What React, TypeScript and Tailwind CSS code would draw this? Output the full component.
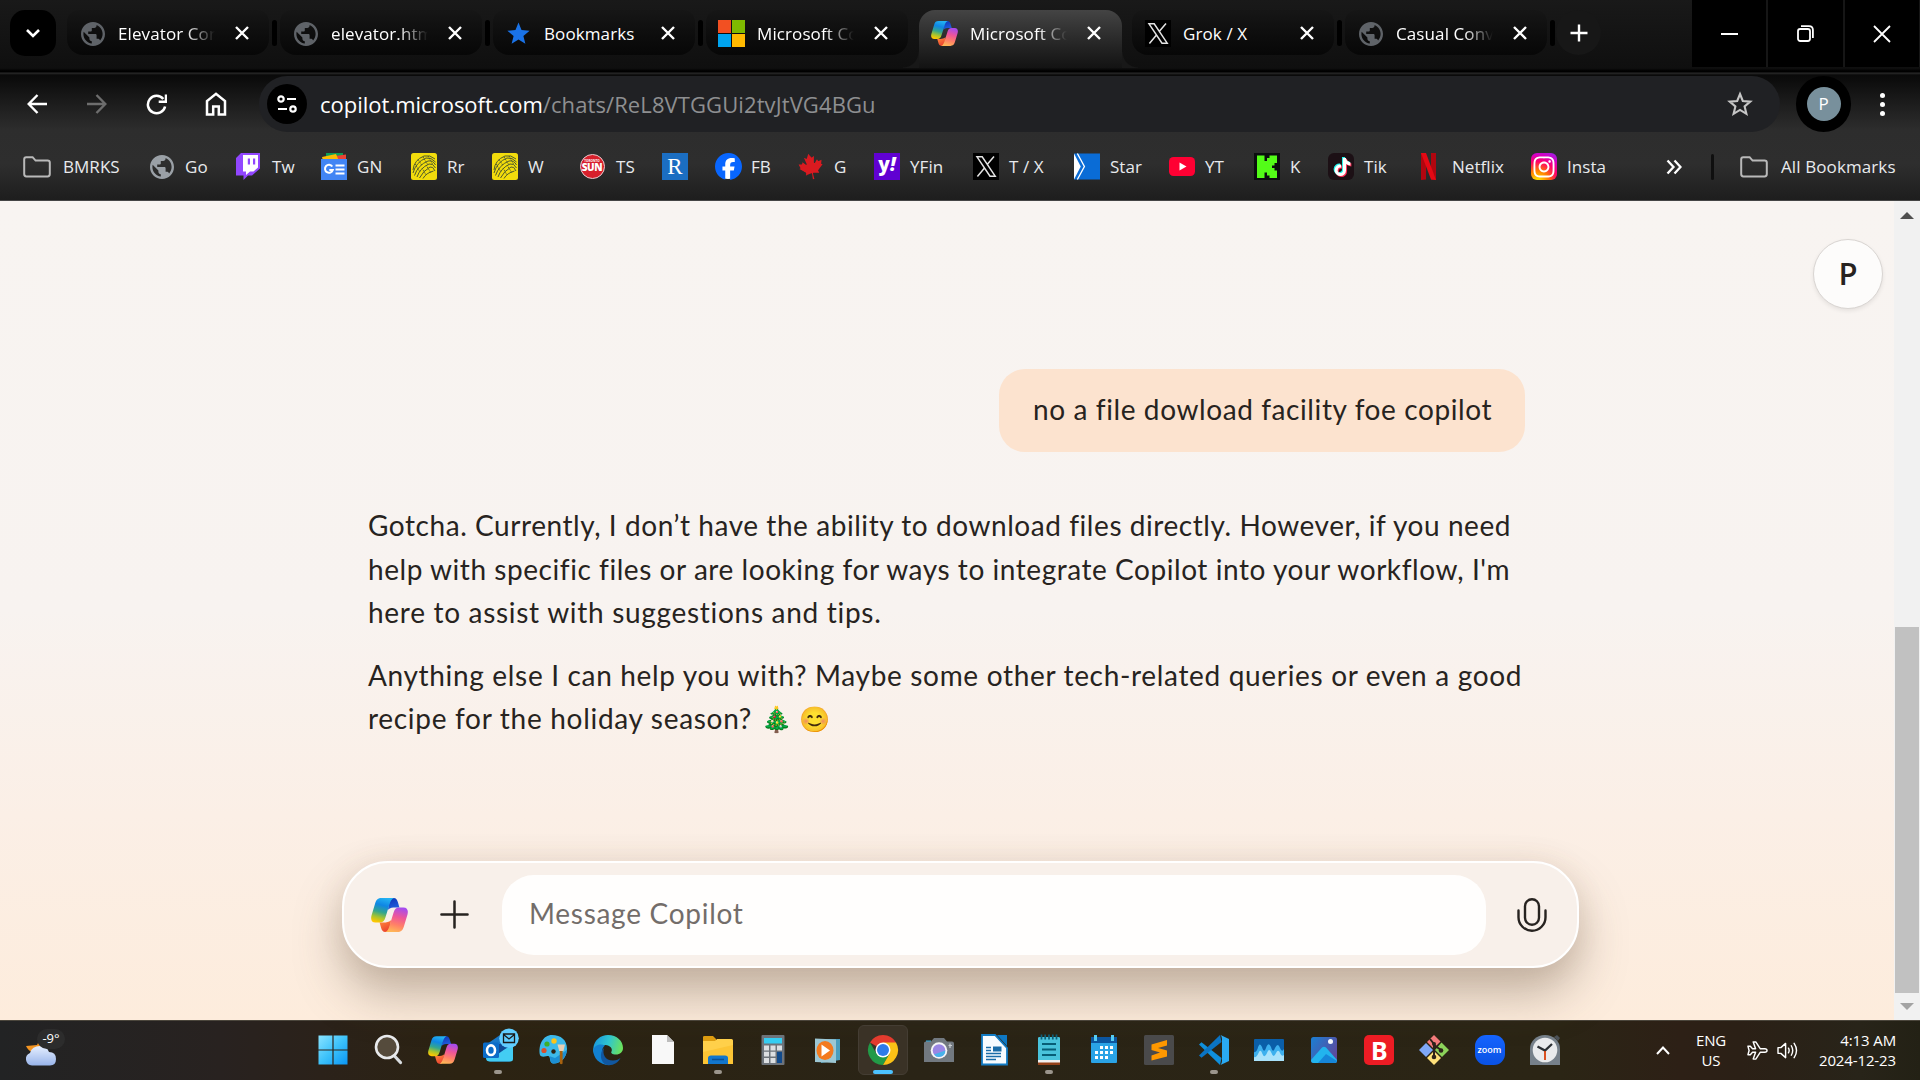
import React from "react";
import { FaFacebook, FaCanadianMapleLeaf, FaTiktok, FaInstagram } from "react-icons/fa6";

/* ---------- shared glyphs ---------- */

const GLOBE =
  "M12 2C6.48 2 2 6.48 2 12s4.48 10 10 10 10-4.48 10-10S17.52 2 12 2zm-1 17.93c-3.95-.49-7-3.85-7-7.93 0-.62.08-1.21.21-1.79L9 15v1c0 1.1.9 2 2 2v1.93zm6.9-2.54c-.26-.81-1-1.39-1.9-1.39h-1v-3c0-.55-.45-1-1-1H8v-2h2c.55 0 1-.45 1-1V7h2c1.1 0 2-.9 2-2v-.41c2.93 1.19 5 4.06 5 7.41 0 2.08-.8 3.97-2.1 5.39z";

function Globe({ className }: { className: string }) {
  return (
    <svg viewBox="2 2 20 20" className={className}>
      <path d={GLOBE} fill="currentColor" />
    </svg>
  );
}

const RIBBON =
  "M10.5 0H23C20.4 .8 19.3 3.6 18.4 6.6L14.4 19.5C13.3 23 12 24.6 8.8 24.6H4.6C.6 24.6-.5 21.6.5 17.6L4.2 5.2C5.4 1.4 7 0 10.5 0Z";
const FOLD = "M20 0H22.6C25.2 0 26.2 1.800 27 4.600L28.400 9.600H24.400C21.600 9.600 19.300 9.800 17 11.800L17.400 8.600C18.400 4.800 18.600 1.600 20 0Z";

function Copilot({ className, id }: { className: string; id: string }) {
  return (
    <svg viewBox="0 0 37 34" className={className}>
      <defs>
        <linearGradient id={`${id}a`} x1=".6" y1="0" x2=".35" y2="1">
          <stop offset="0" stopColor="#23b2f2" />
          <stop offset=".3" stopColor="#0f86e4" />
          <stop offset=".58" stopColor="#34a68d" />
          <stop offset=".8" stopColor="#a7c42f" />
          <stop offset="1" stopColor="#ffc700" />
        </linearGradient>
        <linearGradient id={`${id}b`} x1=".6" y1="0" x2=".35" y2="1">
          <stop offset="0" stopColor="#ffb657" />
          <stop offset=".3" stopColor="#ff7f68" />
          <stop offset=".62" stopColor="#ee5599" />
          <stop offset="1" stopColor="#a54bf0" />
        </linearGradient>
        <linearGradient id={`${id}c`} x1=".3" y1="0" x2=".6" y2="1">
          <stop offset="0" stopColor="#0f38b8" />
          <stop offset="1" stopColor="#2462e0" />
        </linearGradient>
        <linearGradient id={`${id}d`} x1=".3" y1="0" x2=".8" y2="1">
          <stop offset="0" stopColor="#e93b2e" />
          <stop offset="1" stopColor="#ff8a3c" />
        </linearGradient>
      </defs>
      <path d={FOLD} fill={`url(#${id}c)`} />
      <path d={RIBBON} fill={`url(#${id}a)`} />
      <g transform="rotate(180 18.5 17)">
        <path d={FOLD} fill={`url(#${id}d)`} />
        <path d={RIBBON} fill={`url(#${id}b)`} />
      </g>
    </svg>
  );
}

function MicrosoftLogo() {
  return (
    <div className="grid h-[27px] w-[27px] grid-cols-2 gap-[1.5px]">
      <i className="bg-[#f25022]" />
      <i className="bg-[#7fba00]" />
      <i className="bg-[#00a4ef]" />
      <i className="bg-[#ffb900]" />
    </div>
  );
}

function XTile() {
  return (
    <svg viewBox="0 0 26 27" className="h-[27px] w-[26px]">
      <path d="M0 0H26V27H0Z" fill="#000" />
      <path d="M4 3.800H9.200L22.200 23.200H17ZM21 3.500L14.600 11M11.300 15.200L4.400 23.500" fill="none" stroke="#e4e4e4" strokeWidth="1.500" />
    </svg>
  );
}

function Folder() {
  return (
    <svg viewBox="0 0 28 22" className="h-[22px] w-7" fill="none" stroke="#b9b9b9" strokeWidth="2">
      <path d="M1.2 18V3.4Q1.2 1.2 3.2 1.2H9.6L12.6 4.6H24.6Q26.8 4.6 26.8 6.6V18Q26.8 20.4 24.6 20.4H3.4Q1.2 20.4 1.2 18Z" />
    </svg>
  );
}

/* ---------- tab strip ---------- */

function CloseX() {
  return (
    <svg viewBox="0 0 14 14" className="h-[14px] w-[14px]" stroke="#fff" strokeWidth="2.4">
      <path d="M1 1L13 13M13 1L1 13" />
    </svg>
  );
}

function Tab({ icon, title, active, edge }: { icon: React.ReactNode; title: string; active?: boolean; edge?: boolean }) {
  return (
    <div className="flex w-[213px] shrink-0 items-start">
      <div
        className={
          active
            ? "relative flex h-[58px] w-[203px] items-start rounded-t-[16px] bg-gradient-to-b from-[#444444] to-[#131313]"
            : "flex h-[45px] w-[202px] items-start rounded-b-[16px] rounded-t-[12px] bg-gradient-to-b from-[#161616] to-[#070707]"
        }
      >
        {active && (
          <>
            <i className="absolute -left-4 bottom-0 h-4 w-4 bg-[radial-gradient(circle_at_0_0,transparent_15px,#181818_16px)]" />
            <i className="absolute -right-4 bottom-0 h-4 w-4 bg-[radial-gradient(circle_at_100%_0,transparent_15px,#181818_16px)]" />
          </>
        )}
        <div className="ml-[12px] mt-[10px] flex h-[27px] w-[27px] items-center justify-center">{icon}</div>
        <span
          className="ml-3 mt-[9px] w-[97px] overflow-hidden whitespace-nowrap text-[17px] leading-[29px] tracking-[0.1px] text-white [mask-image:linear-gradient(to_right,#000_68px,transparent_97px)] data-[full=true]:[mask-image:none]"
          data-full={title.length < 10}
        >
          {title}
        </span>
        <div className="ml-[20px] mt-[16px]">
          <CloseX />
        </div>
      </div>
      {edge && <i className="ml-[3px] mt-[10px] h-[26px] w-[5px] rounded-full bg-black" />}
    </div>
  );
}

function TabStrip() {
  return (
    <div className="flex h-[68px] items-start bg-gradient-to-b from-[#191919] to-[#0f0f0f]">
      <div className="ml-[10px] mt-[10px] flex h-[46px] w-[46px] items-center justify-center rounded-[15px] bg-black">
        <svg viewBox="0 0 14 9" className="h-[9px] w-[14px]" fill="none" stroke="#fff" strokeWidth="2.6">
          <path d="M1 1L7 7L13 1" />
        </svg>
      </div>
      <div className="ml-[11px] mt-[10px] flex">
        <Tab edge icon={<Globe className="h-6 w-6 text-[#5f6368]" />} title="Elevator Conv" />
        <Tab edge icon={<Globe className="h-6 w-6 text-[#5f6368]" />} title="elevator.html" />
        <Tab
          edge
          title="Bookmarks"
          icon={
            <svg viewBox="0 0 24 24" className="h-[25px] w-[25px]">
              <path d="M12 1.5l2.9 7.2 7.8.6-6 5 1.9 7.6L12 17.8l-6.6 4.1 1.9-7.6-6-5 7.8-.6z" fill="#1a73e8" />
            </svg>
          }
        />
        <Tab icon={<MicrosoftLogo />} title="Microsoft Cop" />
        <Tab active icon={<Copilot id="tab" className="h-[25px] w-[27px]" />} title="Microsoft Cop" />
        <Tab edge icon={<XTile />} title="Grok / X" />
        <Tab edge icon={<Globe className="h-6 w-6 text-[#5f6368]" />} title="Casual Conve" />
      </div>
      <div className="-ml-[2px] mt-[10px] flex h-[45px] w-[45px] items-center justify-center rounded-full bg-[#171717]">
        <svg viewBox="0 0 18 18" className="h-[18px] w-[18px]" stroke="#fff" strokeWidth="2.4">
          <path d="M9 .5V17.5M.5 9H17.5" />
        </svg>
      </div>
      <div className="ml-auto flex h-[67px] w-[228px] gap-[2px] bg-[#161616] pr-[1px]">
        <div className="flex flex-1 items-center justify-center bg-black">
          <i className="h-[2px] w-[17px] bg-white" />
        </div>
        <div className="flex flex-1 items-center justify-center bg-black">
          <svg viewBox="0 0 17 17" className="h-[17px] w-[17px]" fill="none" stroke="#fff" strokeWidth="1.8">
            <rect x="1" y="4" width="12" height="12" rx="2.2" />
            <path d="M4 1.2H12Q15.9 1.2 15.9 5V13" />
          </svg>
        </div>
        <div className="flex flex-1 items-center justify-center bg-black">
          <svg viewBox="0 0 18 18" className="h-[18px] w-[18px]" stroke="#fff" strokeWidth="1.8">
            <path d="M1 1L17 17M17 1L1 17" />
          </svg>
        </div>
      </div>
    </div>
  );
}

/* ---------- address row ---------- */

function AddressRow() {
  return (
    <div className="flex h-[58px] items-center">
      <svg viewBox="0 0 20 20" className="ml-[27px] h-5 w-5" fill="none" stroke="#fff" strokeWidth="2.4">
        <path d="M20 10H2M10.5 1L1.7 10L10.5 19" />
      </svg>
      <svg viewBox="0 0 20 20" className="ml-10 h-5 w-5" fill="none" stroke="#6d6d6d" strokeWidth="2.4">
        <path d="M0 10H18M9.5 1L18.3 10L9.5 19" />
      </svg>
      <svg viewBox="0 0 21 21" className="ml-[39px] h-[21px] w-[21px]" fill="none" stroke="#fff" strokeWidth="2.5">
        <path d="M17.3 5A8.7 8.7 0 1 0 19.1 12.5" />
        <path d="M20 .5V7.7H12.7" />
      </svg>
      <svg viewBox="0 0 22 24" className="ml-[38px] h-6 w-[22px]" fill="none" stroke="#fff" strokeWidth="2.5">
        <path d="M2 22.5V9L11 1.8L20 9V22.5H13.8V14.5H8.2V22.5Z" />
      </svg>
      <div className="ml-[32px] flex h-[56px] w-[1521px] items-center rounded-full bg-[#202124]">
        <div className="ml-2 flex h-10 w-10 items-center justify-center rounded-full bg-black">
          <svg viewBox="0 0 20 18" className="h-[18px] w-5" fill="none" stroke="#fff" strokeWidth="2.2">
            <circle cx="4" cy="4" r="2.7" />
            <path d="M10 4H19M1 14H10" />
            <circle cx="16" cy="14" r="2.7" />
          </svg>
        </div>
        <div className="ml-[13px] whitespace-nowrap text-[22px] leading-none text-white">
          <span>copilot.microsoft.com</span>
          <span className="tracking-[0.1px] text-[#8e8f91]">/chats/ReL8VTGGUi2tvJtVG4BGu</span>
        </div>
        <svg viewBox="0 0 26 26" className="ml-auto mr-[27px] h-[26px] w-[26px]" fill="none" stroke="#c6c6c6" strokeWidth="2.1">
          <path d="M13 3l2.8 7 7.5.6-5.7 4.900 1.800 7.300L13 18.900l-6.400 3.900 1.800-7.300-5.700-4.900 7.500-.6z" />
        </svg>
      </div>
      <div className="ml-4 flex h-[56px] w-[55px] items-center justify-center rounded-full bg-black">
        <div className="flex h-[34px] w-[34px] items-center justify-center rounded-full bg-[#78909c] text-[17px] text-white">P</div>
      </div>
      <div className="ml-[29px] flex flex-col gap-[4px]">
        <i className="h-[5px] w-[5px] rounded-full bg-white" />
        <i className="h-[5px] w-[5px] rounded-full bg-white" />
        <i className="h-[5px] w-[5px] rounded-full bg-white" />
      </div>
    </div>
  );
}

/* ---------- bookmarks bar ---------- */

function RogersBall() {
  return (
    <svg viewBox="0 0 26 27" className="h-[27px] w-[26px]">
      <rect width="26" height="27" rx="2.5" fill="#f2dc0c" />
      <g fill="none" stroke="#4f5a2c" strokeWidth="1">
        <path d="M2 17Q3 7 13 3Q19 1.500 24 6M2 20Q5 9 15 5Q20 4 24.500 9M3.500 22.500Q7 12 17 8Q22 7 24.500 12M6 24Q9 15 18 11Q22 10 24.500 15M8.500 25Q12 18 19 14Q22 13 24 18M12 25.500Q15 20 22.500 18" />
        <path d="M7 6.500L11 12.500M12 4L17 12M17 3L21.500 11M4 11L9 19M11 15L15 22M15 12L20 20" strokeDasharray="1.5 1" />
      </g>
    </svg>
  );
}

const BOOKMARKS: { label: string; width: string; icon: React.ReactNode }[] = [
  { label: "Go", width: "w-[87px]", icon: <Globe className="h-6 w-6 text-[#9aa0a6]" /> },
  {
    label: "Tw",
    width: "w-[85px]",
    icon: (
      <svg viewBox="0 0 24 27" className="-ml-[2px] h-[27px] w-6">
        <path d="M5 0H24V15.5L16 22.5H12L7.5 27V22.5H0V5Z" fill="#9146ff" />
        <path d="M7 2H22V14.5L17.5 18.5H14L10 22V18.5H7Z" fill="#fff" />
        <path d="M11.8 5.5H14V11.5H11.8ZM17 5.5H19.2V11.5H17Z" fill="#9146ff" />
      </svg>
    ),
  },
  {
    label: "GN",
    width: "w-[90px]",
    icon: (
      <svg viewBox="0 0 26 27" className="h-[27px] w-[26px]">
        <path d="M5 0H22V7H5Z" fill="#0c9d58" />
        <path d="M14 3L25 1.5V8H14Z" fill="#ea4335" />
        <path d="M1 4L15 1L18 8H2Z" fill="#fbbc04" />
        <path d="M0 6H26V27H0Z" fill="#4285f4" />
        <path d="M11.3 13.5A4 4 0 1 0 11.8 17H8.3M14.5 12.5H23.5M14.5 16.5H23.5M14.5 20.5H23.5" fill="none" stroke="#fff" strokeWidth="2" />
      </svg>
    ),
  },
  { label: "Rr", width: "w-[81px]", icon: <RogersBall /> },
  { label: "W", width: "w-[88px]", icon: <RogersBall /> },
  {
    label: "TS",
    width: "w-[82px]",
    icon: (
      <div className="-ml-[2px] flex h-[25px] w-[25px] shrink-0 flex-col items-center justify-center rounded-full border-[1.5px] border-[#e8cdd0] bg-[#d8202c] pb-[2px] leading-none text-white">
        <span className="text-[3px] font-bold leading-[4px]">TORONTO</span>
        <span className="text-[10px] font-extrabold leading-[9px] tracking-[-0.4px]">SUN</span>
      </div>
    ),
  },
  {
    label: "",
    width: "w-[53px]",
    icon: (
      <div className="flex h-[27px] w-[26px] items-center justify-center bg-[#1b6ec2] font-['Liberation_Serif'] text-[23px] leading-none text-white">R</div>
    ),
  },
  {
    label: "FB",
    width: "w-[83px]",
    icon: (
      <div className="flex h-[24px] w-[24px] items-center justify-center rounded-full bg-white">
        <FaFacebook className="h-[27px] w-[27px] shrink-0 text-[#0866ff]" />
      </div>
    ),
  },
  { label: "G", width: "w-[76px]", icon: <FaCanadianMapleLeaf className="h-[27px] w-[27px] -rotate-12 text-[#da1a20]" /> },
  {
    label: "YFin",
    width: "w-[99px]",
    icon: (
      <div className="flex h-[27px] w-[27px] items-center justify-center bg-[#6001d2] pb-1 text-[19px] font-extrabold leading-none text-white">
        y<span className="italic">!</span>
      </div>
    ),
  },
  { label: "T / X", width: "w-[101px]", icon: <XTile /> },
  {
    label: "Star",
    width: "w-[95px]",
    icon: (
      <svg viewBox="0 0 27 27" className="h-[27px] w-[27px]">
        <path d="M0 0H27V27H0Z" fill="#0a6cd6" />
        <path d="M0 0L7 13.5L0 27Z" fill="#fff" />
        <path d="M3.5 0L10.8 13.5L3.5 27" fill="none" stroke="#fff" strokeWidth="1.4" />
      </svg>
    ),
  },
  {
    label: "YT",
    width: "w-[85px]",
    icon: (
      <svg viewBox="0 0 26 19" className="h-[19px] w-[26px]">
        <rect width="26" height="19" rx="4.5" fill="#ff0033" />
        <path d="M10.5 5.5L17.5 9.5L10.5 13.5Z" fill="#fff" />
      </svg>
    ),
  },
  {
    label: "K",
    width: "w-[74px]",
    icon: (
      <svg viewBox="0 0 26 27" className="h-[27px] w-[26px]">
        <path d="M0 0H26V27H0Z" fill="#0b0e0f" />
        <path d="M3 2.5H10.5V8H13V5H15.5V2.5H23V10H20.5V12.5H18V15H20.5V17.5H23V25H15.5V22.5H13V19.5H10.5V25H3Z" fill="#53fc18" />
      </svg>
    ),
  },
  {
    label: "Tik",
    width: "w-[88px]",
    icon: (
      <div className="relative flex h-[27px] w-[27px] items-center justify-center rounded-[6px] bg-[#1c1015]">
        <FaTiktok className="absolute left-[4.5px] top-[4px] h-[18px] w-[17px] text-[#25f4ee]" />
        <FaTiktok className="absolute left-[6.5px] top-[5.5px] h-[18px] w-[17px] text-[#fe2c55]" />
        <FaTiktok className="absolute left-[5.5px] top-[4.5px] h-[18px] w-[17px] text-white" />
      </div>
    ),
  },
  {
    label: "Netflix",
    width: "w-[115px]",
    icon: (
      <svg viewBox="0 0 15 27" className="-ml-[2px] h-[27px] w-[15px]">
        <path d="M0 0H5V26.5L0 27ZM10 0H15V27L10 26.5Z" fill="#b1060f" />
        <path d="M0 0H5L15 27L10 26.5Z" fill="#e50914" />
      </svg>
    ),
  },
  {
    label: "Insta",
    width: "w-[100px]",
    icon: (
      <div className="flex h-[27px] w-[27px] items-center justify-center rounded-[6px] bg-[radial-gradient(circle_at_25%_105%,#ffd600_8%,#ff7a00_32%,#ff0169_58%,#d300c5_78%,#7638fa_105%)]">
        <FaInstagram className="h-[24px] w-[24px] text-white" />
      </div>
    ),
  },
];

function BookmarksBar() {
  return (
    <div className="flex h-[67px] items-center text-[17px] tracking-[0.05px] text-[#e8eaed]">
      <div className="ml-[23px] flex w-[126px] items-center gap-3">
        <Folder />
        BMRKS
      </div>
      {BOOKMARKS.map((b, i) => (
        <div key={i} className={`flex shrink-0 items-center gap-[10px] whitespace-nowrap ${b.width}`}>
          <div className="flex h-[27px] w-[26px] shrink-0 items-center justify-center">{b.icon}</div>
          {b.label}
        </div>
      ))}
      <svg viewBox="0 0 16 16" className="ml-auto h-4 w-4" fill="none" stroke="#fff" strokeWidth="2.3">
        <path d="M1.5 1.5L7.5 8L1.5 14.5M8.5 1.5L14.5 8L8.5 14.5" />
      </svg>
      <i className="ml-[29px] h-[26px] w-[3px] rounded-full bg-[#0f0f0f]" />
      <div className="ml-[26px] mr-[24px] flex w-[156px] items-center gap-[13px] whitespace-nowrap tracking-[0.1px]">
        <Folder />
        All Bookmarks
      </div>
    </div>
  );
}

/* ---------- chat page ---------- */

function Chat() {
  return (
    <div className="flex h-[819px]">
      <main className="flex w-[1894px] shrink-0 flex-col bg-[linear-gradient(to_bottom,#f8f4f1_0%,#f8f3f0_50%,#fbefe6_75%,#fdecdc_100%)] font-['Lato','Noto_Color_Emoji',sans-serif] text-[28px] leading-[43.5px] text-[#272320]">
        <div className="ml-auto mr-[11px] mt-[38px] flex h-[70px] w-[70px] shrink-0 items-center justify-center rounded-full border-[1.5px] border-[#d9d5d2] bg-[#fdfcfb] font-['Open_Sans'] text-[31px] font-semibold shadow-[0_2px_4px_rgba(0,0,0,0.08)]">
          P
        </div>
        <div className="ml-[368px] w-[1157px]">
          <div className="ml-auto mt-[60px] flex h-[83px] w-[526px] items-center whitespace-nowrap rounded-[26px] bg-[#fce3cf] pb-[1px] pl-[34px] tracking-[0.6px]">
            no a file dowload facility foe copilot
          </div>
          <div className="mt-[52px] whitespace-nowrap">
            <p className="tracking-[0.56px]">Gotcha. Currently, I don’t have the ability to download files directly. However, if you need</p>
            <p className="tracking-[0.55px]">help with specific files or are looking for ways to integrate Copilot into your workflow, I'm</p>
            <p className="tracking-[0.7px]">here to assist with suggestions and tips.</p>
          </div>
          <div className="mt-[19px] whitespace-nowrap">
            <p className="tracking-[0.67px]">Anything else I can help you with? Maybe some other tech-related queries or even a good</p>
            <p className="flex items-center tracking-[0.7px]">
              recipe for the holiday season?
              <span className="ml-[9px] w-[38px] text-[25px] tracking-normal">🎄</span>
              <span className="text-[25px] tracking-normal">😊</span>
            </p>
          </div>
        </div>
        <div className="mb-[52px] ml-[342px] mt-auto flex h-[107px] w-[1237px] items-center rounded-[46px] border-2 border-white bg-[#f8f0ea] shadow-[0_26px_48px_rgba(95,75,55,0.36),0_0px_30px_rgba(120,90,60,0.09)]">
          <Copilot id="box" className="ml-[27px] h-[34px] w-[37px]" />
          <svg viewBox="0 0 30 30" className="ml-[32px] h-[29px] w-[29px]" stroke="#272320" strokeWidth="2.6" strokeLinecap="round">
            <path d="M15 1.5V28.5M1.5 15H28.5" />
          </svg>
          <div className="ml-[33px] flex h-20 w-[984px] items-center rounded-[32px] bg-[#fffefd] pb-[1px] pl-[27px] tracking-[0.72px] text-[#736d6a]">
            Message Copilot
          </div>
          <svg viewBox="0 0 30 34" className="ml-[31px] h-[34px] w-[30px]" fill="none" stroke="#272320" strokeWidth="2.4" strokeLinecap="round">
            <rect x="8" y="1.2" width="14" height="25.6" rx="7" />
            <path d="M1.5 12.5V19.2A13.5 13.5 0 0 0 28.5 19.2V12.5" />
          </svg>
        </div>
      </main>
      <div className="flex w-[26px] flex-col items-center bg-[#f1f1f1]">
        <svg viewBox="0 0 14 7" className="mt-[11px] h-[7px] w-[14px]">
          <path d="M0 7L7 0L14 7Z" fill="#505050" />
        </svg>
        <i className="mt-auto h-[366px] w-[24px] bg-[#c1c1c1]" />
        <svg viewBox="0 0 14 7" className="mb-[10px] mt-[10px] h-[7px] w-[14px]">
          <path d="M0 0L7 7L14 0Z" fill="#a3a3a3" />
        </svg>
      </div>
    </div>
  );
}

/* ---------- taskbar ---------- */

const S = "h-9 w-9";

const APPS: { icon: React.ReactNode; state?: "open" | "focus" }[] = [
  {
    icon: (
      <svg viewBox="0 0 36 36" className={S}>
        <defs>
          <linearGradient id="win" x1="0" y1="0" x2="1" y2="1">
            <stop offset="0" stopColor="#8ae4ff" />
            <stop offset=".5" stopColor="#3dc2fa" />
            <stop offset="1" stopColor="#0a95f5" />
          </linearGradient>
        </defs>
        <path d="M3.5 3.5H17.4V17.4H3.5ZM18.6 3.5H32.5V17.4H18.6ZM3.5 18.6H17.4V32.5H3.5ZM18.6 18.6H32.5V32.5H18.6Z" fill="url(#win)" />
      </svg>
    ),
  },
  {
    icon: (
      <svg viewBox="0 0 36 36" className={S} fill="none">
        <path d="M24.5 24L30.5 30.5" stroke="#d9dde0" strokeWidth="3.2" strokeLinecap="round" />
        <circle cx="17" cy="15" r="11" fill="#554b3c" stroke="#e8eaec" strokeWidth="2.6" />
      </svg>
    ),
  },
  { icon: <Copilot id="bar" className="h-7 w-[30px]" /> },
  {
    state: "open",
    icon: (
      <svg viewBox="0 0 44 44" className="h-11 w-11 shrink-0">
        <path d="M11 16L24 7L36 16V31Q36 33.5 33 33.5H15Q11 33.5 10 29Z" fill="#1878c8" />
        <path d="M10 30L37 17V31Q37 33.5 34 33.5H14Q10 33.5 10 30Z" fill="#43cdf3" />
        <path d="M22 16H36L22 26Z" fill="#104a96" />
        <rect x="7" y="14.5" width="16" height="15.5" rx="1.5" fill="#0a6cc8" />
        <ellipse cx="15" cy="22.2" rx="4" ry="4.8" fill="none" stroke="#fff" strokeWidth="2.6" />
        <circle cx="33" cy="10.200" r="9.800" fill="#60cdff" />
        <path d="M27.500 6H38.500V14.500H27.500ZM27.500 6.500L33 11L38.500 6.500" fill="none" stroke="#1a1a1a" strokeWidth="1.300" />
      </svg>
    ),
  },
  {
    icon: (
      <svg viewBox="0 0 36 36" className={S}>
        <path d="M17 3C8 3 3 13 5 23C6 26 12 24 13 24C16 24 14 31 18 31.5C26 32 32 25 32 17C32 8 26 3 17 3Z" fill="#3cb9ea" />
        <path d="M14 24C16 24 14 31 18 31.5C24 32 31 27 32 18L20 26Z" fill="#1c8fd4" />
        <circle cx="9" cy="18.5" r="2.6" fill="#da502c" />
        <circle cx="12" cy="12" r="2.6" fill="#3fae2a" />
        <circle cx="19" cy="9" r="2.7" fill="#fcc419" />
        <circle cx="18.5" cy="19.5" r="2.2" fill="#2c2314" />
        <path d="M24.8 19H27.6V31.5Q26.2 33 24.8 31.5Z" fill="#a8620f" />
        <path d="M22.5 12.5H30L28.5 19H24.2Z" fill="#e9cfb4" />
      </svg>
    ),
  },
  {
    icon: (
      <svg viewBox="0 0 36 36" className={S}>
        <defs>
          <linearGradient id="edge" x1="0" y1=".3" x2="1" y2=".5">
            <stop offset="0" stopColor="#1996dd" />
            <stop offset=".5" stopColor="#2fc5d0" />
            <stop offset="1" stopColor="#6be35c" />
          </linearGradient>
        </defs>
        <path d="M3.2 17C4 8 10.5 3 18 3C27 3 33 9 33 16C33 20 30 22.5 26 22.5C22 22.5 20.5 21 21.5 19.5C23 17 20 13 15.5 13C9 13 3.5 17 3.2 22Z" fill="url(#edge)" />
        <path d="M3.2 18C5 12.5 11 11.5 15 13.5C11 16 11 24 15 28C18 31 22 33 20 33C10 33.5 3 26 3.2 18Z" fill="#1280d0" />
        <path d="M14 16C12 22 15 28.5 23 28.5C26.5 28.5 29 27 30.5 26C28 31 22.5 34 17 33C10 31.5 9 20 14 16Z" fill="#11579f" />
      </svg>
    ),
  },
  {
    icon: (
      <svg viewBox="0 0 36 36" className={S}>
        <path d="M7 3H22L29 10V32H7Z" fill="#f8f8f8" />
        <path d="M22 3L29 10H22Z" fill="#bdbdbd" />
      </svg>
    ),
  },
  {
    state: "open",
    icon: (
      <svg viewBox="0 0 36 36" className={S}>
        <path d="M3 5Q3 4 4.500 4H13L16 7V12H3Z" fill="#dd9c10" />
        <path d="M3 9H15L17 7H31.500Q33 7 33 8.500V32H3Z" fill="#ffd04a" />
        <path d="M3 20L33 13V32H3Z" fill="#fcc535" />
        <path d="M8 32V26Q8 23.500 11 23.500H25Q28 23.500 28 26V32Z" fill="#1276cc" />
        <path d="M12 27.500H24" stroke="#0b4f92" strokeWidth="1.500" />
      </svg>
    ),
  },
  {
    icon: (
      <svg viewBox="0 0 36 36" className={S}>
        <rect x="6.500" y="3" width="23" height="30" rx="1" fill="#6d737a" />
        <path d="M9 6H27V11.500H9Z" fill="#35cdf2" />
        <path d="M9 13.500H14V18.500H9ZM15.500 13.500H20.500V18.500H15.500ZM22 13.500H27V18.500H22ZM9 19.800H14V24.500H9ZM15.500 19.800H20.500V24.500H15.500ZM9 26H14V31H9ZM15.500 26H20.500V31H15.500Z" fill="#dcdfe2" />
        <path d="M22 19.800H27V31H22Z" fill="#114a8b" />
      </svg>
    ),
  },
  {
    icon: (
      <svg viewBox="0 0 36 36" className={S}>
        <path d="M11 7H30V28L11 31Z" fill="#4a9dbd" />
        <path d="M5 6.500L26 7.500V31L5 30Z" fill="#9cc7d4" />
        <ellipse cx="15" cy="18.500" rx="8.500" ry="9.500" fill="#f37a1f" />
        <path d="M11.500 12.500L20 18.500L11.500 24.500Z" fill="#fff" />
      </svg>
    ),
  },
  {
    state: "focus",
    icon: (
      <svg viewBox="0 0 36 36" className={S}>
        <path d="M18 18L5 10.500A15 15 0 0 1 31 10.500Z" fill="#e33b2e" />
        <path d="M5 10.500A15 15 0 0 0 18 33L24.500 21.700L11.500 21.700Z" fill="#229a47" />
        <path d="M18 33A15 15 0 0 0 31 10.500H18L24.500 21.700Z" fill="#fbc116" />
        <circle cx="18" cy="18" r="7.500" fill="#fff" />
        <circle cx="18" cy="18" r="6" fill="#2f7bea" />
      </svg>
    ),
  },
  {
    icon: (
      <svg viewBox="0 0 36 36" className={S}>
        <path d="M5 8.500H10V12H5Z" fill="#2ba7dc" />
        <path d="M3 11Q3 9.500 5 9.500H10L13 6H23L26 9.500H31Q33 9.500 33 11.500V30H3Z" fill="#727980" />
        <path d="M29 11.500V16M27.500 13.500H31" stroke="#c9cdd0" strokeWidth="1.200" />
        <circle cx="18" cy="18.500" r="8.300" fill="#f4f4f6" />
        <circle cx="18" cy="18.500" r="6.300" fill="#9a86e4" />
        <path d="M13 22.500A6.300 6.300 0 0 0 24.300 18.500Z" fill="#48b2ea" />
      </svg>
    ),
  },
  {
    icon: (
      <svg viewBox="0 0 36 36" className={S}>
        <path d="M6 3H19L31 16V32.500H6Z" fill="#f7fbff" stroke="#127bc4" strokeWidth="1.800" />
        <path d="M21 3H31V14Z" fill="#0e78c4" />
        <path d="M10 15.500H15M10 18.500H15M10 21.500H25M10 24.500H25M10 27.500H20" stroke="#1b6ca8" strokeWidth="1.600" />
        <path d="M17 14.500H25.500V19.500H17Z" fill="#1b6ca8" />
      </svg>
    ),
  },
  {
    state: "open",
    icon: (
      <svg viewBox="0 0 36 36" className={S}>
        <path d="M7 29H29V33H7Z" fill="#94421a" />
        <path d="M7 27.500H29V30.500H7Z" fill="#f1f1f1" />
        <path d="M7 6Q7 5 8.500 5H27.500Q29 5 29 6V28H7Z" fill="#49c3dc" />
        <path d="M10.500 2.500V7.500M14.200 2.500V7.500M18 2.500V7.500M21.800 2.500V7.500M25.500 2.500V7.500" stroke="#0d5f78" strokeWidth="1.700" />
        <path d="M11 12H25M11 17.500H25M11 23H25" stroke="#075e77" strokeWidth="2.200" />
      </svg>
    ),
  },
  {
    icon: (
      <svg viewBox="0 0 36 36" className={S}>
        <rect x="5" y="5" width="26" height="26" rx="1" fill="#2aa3e6" />
        <path d="M5 5H31V11H5Z" fill="#0b559f" />
        <path d="M9.500 3V9M26.500 3V9" stroke="#55cdf4" strokeWidth="3" />
        <path d="M14 14H17V17H14ZM19 14H22V17H19ZM24 14H27V17H24ZM9 19H12V22H9ZM14 19H17V22H14ZM19 19H22V22H19ZM24 19H27V22H24ZM9 24H12V27H9ZM14 24H17V27H14ZM19 24H22V27H19Z" fill="#fff" />
      </svg>
    ),
  },
  {
    icon: (
      <svg viewBox="0 0 36 36" className={S}>
        <rect x="3" y="3" width="30" height="30" rx="1.500" fill="#4a4a4b" />
        <path d="M26 8V13.500L17 16L26 18.500V24.500L10.500 28.500V23.500L19 20.500L10.500 18V12.500Z" fill="#ff9800" />
      </svg>
    ),
  },
  {
    state: "open",
    icon: (
      <svg viewBox="0 0 36 36" className={S}>
        <path d="M3 12.500L5.500 10.200L25.500 26L24 33Z" fill="#0f8fdc" />
        <path d="M3 23.500L5.500 25.800L25.500 10L24 3Z" fill="#0a74c4" />
        <path d="M24.500 3L33 7V29L24.500 33Q26 31 26 29V7Q26 4.500 24.500 3Z" fill="#2aaaf4" />
      </svg>
    ),
  },
  {
    icon: (
      <svg viewBox="0 0 36 36" className={S}>
        <rect x="3" y="7" width="30" height="22" rx="1" fill="#0a5ea8" />
        <path d="M3 20Q5 21 6.500 17Q8.500 9 11 15Q13 22 15 16Q17.500 9 20 15Q22 22 24 16Q27 10 29 16Q31 21 33 17V29H3Z" fill="#3db0ee" />
        <path d="M3 25Q5.500 26 7.500 21Q9.500 16 11.500 22Q13.500 27 16 21Q18 15 20.500 21Q22.500 27 25 21Q27.500 16 29.500 22Q31 25 33 23V29H3Z" fill="#a9e2fb" />
      </svg>
    ),
  },
  {
    icon: (
      <svg viewBox="0 0 36 36" className={S}>
        <defs>
          <linearGradient id="pho" x1="0" y1="0" x2="1" y2=".6">
            <stop offset="0" stopColor="#1a80d4" />
            <stop offset="1" stopColor="#5c4a9e" />
          </linearGradient>
        </defs>
        <rect x="5" y="5" width="26" height="26" rx="2.500" fill="url(#pho)" />
        <path d="M5 28L16 15.500Q18 14 20 15.500L31 28Q31 31 28.500 31H7.500Q5 31 5 28Z" fill="#22b4ee" />
        <path d="M12 31L20 22L31 29Q31 31 28.500 31Z" fill="#1686d9" />
        <circle cx="24.500" cy="9.500" r="2.500" fill="#f4f8fc" />
      </svg>
    ),
  },
  {
    icon: (
      <div className="flex h-[30px] w-[30px] items-center justify-center rounded-[5px] bg-[#ed1c24] font-['Noto_Sans'] text-[25px] font-bold leading-none text-white">B</div>
    ),
  },
  {
    icon: (
      <svg viewBox="0 0 36 36" className={S}>
        <path d="M18 3L24.500 9.500L17.500 16.500L11 10Z" fill="#f47b7b" />
        <path d="M25.500 10.500L33 18L26 25L19 18Z" fill="#8cd35a" />
        <path d="M10 11L17 18L10 25L3 18Z" fill="#7fa8f8" />
        <path d="M18 19L25 26L18 33L11 26Z" fill="#ffe07a" />
        <path d="M14 7L18 12V25M18 13L25 18" stroke="#2d221a" strokeWidth="2" fill="none" />
        <circle cx="18" cy="25" r="2.300" fill="#2d221a" />
        <circle cx="25" cy="18.500" r="2.300" fill="#2d221a" />
        <circle cx="18" cy="12" r="2" fill="#2d221a" />
      </svg>
    ),
  },
  {
    icon: (
      <div className="flex h-[30px] w-[30px] items-center justify-center rounded-[11px] bg-gradient-to-b from-[#1564ff] to-[#0a52e4] pb-[2px] text-[9px] font-semibold leading-none text-white">zoom</div>
    ),
  },
  {
    icon: (
      <svg viewBox="0 0 36 36" className={S}>
        <path d="M27 5L30 3L33 6L31 9Z" fill="#4b5157" />
        <path d="M3 33V17A15 14 0 0 1 33 17V33Z" fill="#76808a" />
        <circle cx="18" cy="18" r="12.300" fill="#e9eaec" />
        <path d="M10.500 14.500L18 18.500L25 12" stroke="#2b2f33" strokeWidth="2.300" fill="none" />
        <path d="M18 19V28" stroke="#d8400c" strokeWidth="1.800" />
      </svg>
    ),
  },
];

function Taskbar() {
  return (
    <div className="flex h-[60px] items-center border-t border-[#4b463c] bg-[linear-gradient(to_right,#222324_0px,#282220_220px,#2b221a_320px,#2c2312_460px,#2a2416_900px,#2b2515_1560px,#2d2016_1680px,#2b2016_1740px,#282419_1860px,#232115_1920px)] text-white">
      <div className="relative ml-[24px] h-[44px] w-[44px]">
        <svg viewBox="0 0 44 44" className="h-11 w-11">
          <defs>
            <linearGradient id="cloud" x1="0" y1="0" x2="0" y2="1">
              <stop offset="0" stopColor="#e6efff" />
              <stop offset="1" stopColor="#98b4ea" />
            </linearGradient>
          </defs>
          <path d="M15 12L13 16L2 17Q4 22 10 24L20 20Z" fill="#f29422" />
          <path d="M8 36.500A6.500 6.500 0 0 1 6 24Q8 17 16 17Q23 17 25 23Q32 23 32 30Q32 36.500 26 36.500Z" fill="url(#cloud)" />
        </svg>
        <span className="absolute left-[13px] top-0 flex h-5 w-[28px] items-center justify-center rounded-full bg-[#2c2c2c] text-[13px] leading-none">-9°</span>
      </div>
      <div className="ml-[237px] flex pb-[1px]">
        {APPS.map((a, i) => (
          <div key={i} className="flex w-[55.1px] justify-center">
            <div
              className={
                a.state === "focus"
                  ? "flex h-[50px] w-[50px] flex-col items-center rounded-md border border-[#443d33] bg-[#3a3226]"
                  : "flex h-[50px] w-[50px] flex-col items-center border border-transparent"
              }
            >
              <div className="mt-[6px] flex h-9 w-9 items-center justify-center">{a.icon}</div>
              {a.state === "focus" && <i className="mt-[2px] h-[4px] w-5 rounded-full bg-[#4cc2ff]" />}
              {a.state === "open" && <i className="mt-[2px] h-[4px] w-2 rounded-full bg-[#9b958c]" />}
            </div>
          </div>
        ))}
      </div>
      <svg viewBox="0 0 14 9" className="ml-auto h-[9px] w-[14px]" fill="none" stroke="#fff" strokeWidth="2">
        <path d="M1 8L7 1.500L13 8" />
      </svg>
      <div className="ml-[25px] w-[32px] pb-[2px] text-center text-[15px] leading-[20px] tracking-[-0.2px]">
        ENG
        <br />
        US
      </div>
      <svg viewBox="0 0 22 22" className="ml-[20px] h-[21px] w-[21px]" fill="none" stroke="#fff" strokeWidth="1.500" strokeLinejoin="round">
        <path d="M1 6.500H3.500L5.800 9.200H9L6.500 2H9.200L14 9.200H18.500Q21 9.500 21 11Q21 12.500 18.500 12.800H14L9.200 20H6.500L9 12.800H5.800L3.500 15.500H1L2.200 11Z" />
      </svg>
      <svg viewBox="0 0 22 20" className="ml-[9px] h-[19px] w-[21px]" fill="none" stroke="#fff" strokeWidth="1.500" strokeLinejoin="round" strokeLinecap="round">
        <path d="M1 7V13H4L9 17.500V2.500L4 7Z" />
        <path d="M12 7.500Q13.500 10 12 12.500M15 5Q18 10 15 15M18 2.500Q23 10 18 17.500" />
      </svg>
      <div className="ml-[18px] mr-[24px] w-[80px] whitespace-nowrap pb-[2px] text-right text-[15px] leading-[20px] tracking-[-0.12px]">
        4:13 AM
        <br />
        2024-12-23
      </div>
    </div>
  );
}

export default function App() {
  return (
    <div className="h-[1080px] w-[1920px] overflow-hidden font-['Open_Sans','Noto_Sans',sans-serif]">
      <TabStrip />
      <div className="h-[133px] border-b border-[#454545] bg-[linear-gradient(to_bottom,#101010_0px,#000_3px,#000_4px,#2a2a2a_5px,#0a0a0a_7px,#0b0b0b_10px,#1e1e1e_38px,#2d2d2d_62px,#2e2e2e_96px,#1e1e1e_131px)] pt-[7px]">
        <AddressRow />
        <BookmarksBar />
      </div>
      <Chat />
      <Taskbar />
    </div>
  );
}
